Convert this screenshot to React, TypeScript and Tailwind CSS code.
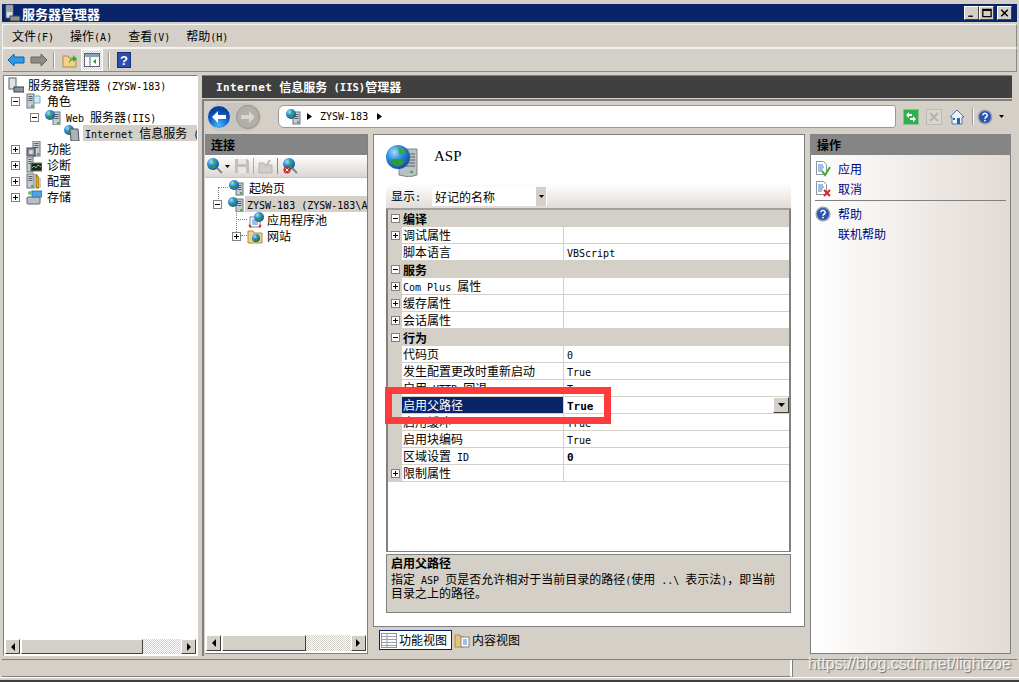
import React from "react";

const latin = "font-['DejaVu_Sans_Mono'] text-[10px]";

// latin runs are narrower than the cjk ones, split them so the widths come out right
const T = ({ children, bold }: { children: string; bold?: boolean }) => {
	const parts = children.split(/([\x00-\x7f]+)/).filter(Boolean);
	return (
		<span className={`whitespace-pre ${bold ? "font-bold" : ""}`}>
			{parts.map((p, i) =>
				/^[\x00-\x7f]/.test(p) ? (
					<span key={i} className={latin}>
						{p}
					</span>
				) : (
					<span key={i}>{p}</span>
				),
			)}
		</span>
	);
};

const Globe = ({ x = 0, y = 0, r = 5 }: { x?: number; y?: number; r?: number }) => (
	<g>
		<circle cx={x + r} cy={y + r} r={r} fill="url(#globeFill)" />
		<path
			d={`M${x + r * 0.35} ${y + r * 1.3} q${r * 0.6} ${-r * 0.35} ${r * 1.2} ${r * 0.05} q${-r * 0.2} ${r * 0.5} ${-r * 0.8} ${r * 0.4} z`}
			fill="#2f9a3a"
		/>
		<path d={`M${x + r} ${y + r * 0.2} q${r * 0.5} ${r * 0.05} ${r * 0.7} ${r * 0.5} l${-r * 0.6} ${r * 0.1} z`} fill="#3aa845" />
	</g>
);

const Tower = ({ x = 8, y = 3, w = 7, h = 13 }: { x?: number; y?: number; w?: number; h?: number }) => (
	<g>
		<rect x={x} y={y} width={w} height={h} fill="#c6ccd2" stroke="#6d747c" strokeWidth="1" />
		<path d={`M${x + 1.5} ${y + 2.5}h${w - 3}M${x + 1.5} ${y + 4.5}h${w - 3}M${x + 1.5} ${y + 6.5}h${w - 3}`} stroke="#555c64" strokeWidth="1" />
		<rect x={x + w - 3} y={y + h - 3} width="2" height="2" fill="#45b045" />
	</g>
);

const Ico = ({ children, w = 16, h = 16, className = "" }: { children: React.ReactNode; w?: number; h?: number; className?: string }) => (
	<svg width={w} height={h} viewBox={`0 0 ${w} ${h}`} className={`shrink-0 ${className}`}>
		{children}
	</svg>
);

const WebServer = () => (
	<Ico>
		<Tower />
		<Globe x={0} y={1} r={5} />
	</Ico>
);

const Expander = ({ open }: { open?: boolean }) => (
	<svg width="9" height="9" viewBox="0 0 9 9" className="shrink-0">
		<rect x="0.5" y="0.5" width="8" height="8" fill="#fff" stroke="#808080" />
		<path d="M2 4.5h5" stroke="#000" />
		{!open && <path d="M4.5 2v5" stroke="#000" />}
	</svg>
);

const ArrowBtn = ({ dir, className = "" }: { dir: "l" | "r"; className?: string }) => (
	<div className={`w-[15px] h-full bg-[#d4d0c8] border border-[#ffffff] border-r-[#404040] border-b-[#404040] flex items-center justify-center shrink-0 ${className}`}>
		<svg width="6" height="8" viewBox="0 0 6 8">
			<path d={dir === "l" ? "M5 0v8L1 4z" : "M1 0v8l4-4z"} fill="#000" />
		</svg>
	</div>
);

const Scrollbar = ({ thumb, track, className = "" }: { thumb: string; track: string; className?: string }) => (
	<div className={`flex items-stretch shrink-0 ${className}`}>
		<ArrowBtn dir="l" />
		<div className={`${thumb} bg-[#d4d0c8] border border-white border-r-[#404040] border-b-[#404040] ml-px`} />
		<div className={`${track} bg-[repeating-conic-gradient(#d4d0c8_0_25%,#ffffff_0_50%)] bg-[length:2px_2px]`} />
		<ArrowBtn dir="r" />
	</div>
);

const Cat = ({ label }: { label: string }) => (
	<div className="h-[17px] bg-[#d4d0c8] flex items-center pl-[3px]">
		<Expander open />
		<span className="ml-[3px] font-bold">{label}</span>
	</div>
);

const Prop = ({ name, value, exp, sel, bold }: { name: string; value?: string; exp?: boolean; sel?: boolean; bold?: boolean }) => (
	<div className="h-[17px] flex border-b border-[#d4d0c8] bg-white">
		<div className="w-[14px] bg-[#d4d0c8] flex items-center justify-center shrink-0">{exp && <Expander />}</div>
		<div className={`w-[162px] pl-[1px] border-r border-[#d4d0c8] shrink-0 leading-[16px] ${sel ? "bg-[#0a246a] text-white" : ""}`}>
			<T>{name}</T>
		</div>
		<div className="flex-1 pl-[3px] leading-[16px] relative">
			{value && <span className={`${latin} ${bold ? "font-bold text-[11px]" : ""}`}>{value}</span>}
			{sel && (
				<div className="absolute right-0 top-0 w-4 h-4 bg-[#d4d0c8] border border-white border-r-[#404040] border-b-[#404040] flex items-center justify-center">
					<svg width="7" height="4" viewBox="0 0 7 4">
						<path d="M0 0h7L3.5 4z" fill="#000" />
					</svg>
				</div>
			)}
		</div>
	</div>
);

const TreeRow = ({ pad, exp, open, icon, text, hl, gap = "ml-[3px]" }: { pad: string; exp?: boolean; open?: boolean; icon: React.ReactNode; text: string; hl?: boolean; gap?: string }) => (
	<div className={`h-4 flex items-center whitespace-nowrap overflow-hidden ${pad}`}>
		{exp !== undefined && <span className="w-[15px] shrink-0 flex">{exp && <Expander open={open} />}</span>}
		{icon}
		<div className={`${gap} h-4 leading-4 flex-1 px-[2px] ${hl ? "bg-[#d4d0c8]" : ""}`}>
			<T>{text}</T>
		</div>
	</div>
);

const HelpIcon = () => (
	<Ico>
		<circle cx="8" cy="8" r="7.5" fill="#9aa0ac" />
		<circle cx="8" cy="8" r="6" fill="#2a55b0" />
		<path d="M5.8 6.3a2.2 2 0 1 1 3.4 1.7c-.8.5-1.2.9-1.2 1.7" fill="none" stroke="#fff" strokeWidth="1.5" />
		<rect x="7.2" y="10.8" width="1.6" height="1.6" fill="#fff" />
	</Ico>
);

const PageIcon = ({ children }: { children: React.ReactNode }) => (
	<Ico>
		<path d="M1.5 .5h7l3 3v10h-10z" fill="#fff" stroke="#8d949c" />
		<path d="M3 4h5M3 6h6M3 8h5M3 10h4" stroke="#3f7fc8" />
		{children}
	</Ico>
);

const Separator = ({ className = "" }: { className?: string }) => <div className={`w-[2px] h-[17px] bg-[#9a9a94] border-r border-white ${className}`} />;

export default function App() {
	return (
		<div className="w-[1019px] h-[682px] overflow-hidden bg-[#d4d0c8] text-[12px] leading-none text-black font-['Noto_Sans_CJK_SC',sans-serif] flex flex-col pt-[4px] relative">
			{/* shared gradients for the icons */}
			<svg width="0" height="0" className="absolute">
				<defs>
					<radialGradient id="globeFill" cx="35%" cy="30%" r="75%">
						<stop offset="0%" stopColor="#9fdcf8" />
						<stop offset="45%" stopColor="#2f8fdc" />
						<stop offset="100%" stopColor="#0f4aa0" />
					</radialGradient>
					<radialGradient id="backFill" cx="50%" cy="85%" r="70%">
						<stop offset="0%" stopColor="#4fb4f5" />
						<stop offset="60%" stopColor="#1460c8" />
						<stop offset="100%" stopColor="#0a3f9a" />
					</radialGradient>
				</defs>
			</svg>

			{/* title bar */}
			<div className="h-[18px] mx-[2px] bg-[#0a246a] flex items-center pl-[3px] pr-[5px] shrink-0">
				<Ico w={16} h={18}>
					<rect x="1" y="1" width="7" height="13" fill="#dfe3e8" stroke="#59606a" />
					<path d="M2 3h5M2 5h5M2 7h5" stroke="#59606a" />
					<rect x="5" y="12" width="10" height="5" fill="#8c929a" stroke="#3c4148" />
				</Ico>
				<span className="ml-[1px] text-white font-bold text-[13px]">服务器管理器</span>
				<div className="ml-auto flex items-center">
					{["M3 10h5", "M2.500 2.500h9v8h-9zM2.500 3.500h9", "M3 3l7 7M10 3l-7 7"].map((d, i) => (
						<div key={i} className={`w-[15px] h-[14px] bg-[#d4d0c8] border border-white border-r-[#404040] border-b-[#404040] flex items-center justify-center ${i === 2 ? "ml-[3px]" : ""}`}>
							<svg width="13" height="12" viewBox="0 0 13 13">
								<path d={d} fill="none" stroke="#000" strokeWidth={i === 2 ? 1.6 : 1.4} />
							</svg>
						</div>
					))}
				</div>
			</div>

			{/* menu */}
			<div className="h-[24px] mt-[2px] mx-[2px] border border-[#f4f3ef] border-r-[#8b8b85] flex items-center gap-[16px] pl-[9px] shrink-0">
				<T>文件(F)</T>
				<T>操作(A)</T>
				<T>查看(V)</T>
				<T>帮助(H)</T>
			</div>

			{/* toolbar */}
			<div className="h-[24px] mx-[2px] border border-[#f4f3ef] border-r-[#8b8b85] border-b-[#8b8b85] flex items-center pl-[4px] shrink-0">
				<Ico w={18} h={14}>
					<path d="M1 7l6-6v3h10v6H7v3z" fill="#2f9be8" stroke="#0f5fa8" />
				</Ico>
				<Ico w={18} h={14} className="ml-[5px]">
					<path d="M17 7l-6-6v3H1v6h10v3z" fill="#8d8d88" stroke="#66665f" />
				</Ico>
				<Separator className="ml-[5px]" />
				<Ico w={16} h={16} className="ml-[7px]">
					<path d="M1 4h5l1 2h7v9H1z" fill="#f2d28a" stroke="#b58a3a" />
					<path d="M7 12c0-4 1-5 4-6V3l4 4-4 3V8c-2 0-3 1-4 4z" fill="#38a838" />
				</Ico>
				<div className="ml-[3px] w-[22px] h-[22px] bg-[repeating-conic-gradient(#d4d0c8_0_25%,#ffffff_0_50%)] bg-[length:2px_2px] border border-[#ffffff] flex items-center justify-center">
					<Ico w={16} h={14}>
						<rect x=".5" y=".5" width="15" height="13" fill="#fff" stroke="#5f6870" />
						<rect x="1" y="1" width="14" height="3" fill="#8aa0b5" />
						<path d="M6 4v9" stroke="#5f6870" />
						<path d="M12 6v5L9 8.500z" fill="#2c9a3a" />
					</Ico>
				</div>
				<Separator className="ml-[5px]" />
				<Ico w={14} h={16} className="ml-[7px]">
					<rect x=".5" y=".5" width="13" height="15" fill="#2a4fb0" stroke="#1b2f78" />
					<text x="7" y="13" textAnchor="middle" fontSize="13" fontWeight="bold" fill="#fff" fontFamily="Liberation Sans">?</text>
				</Ico>
			</div>

			{/* body */}
			<div className="flex-1 min-h-0 flex gap-[4px] pl-[3px] pr-[7px] pt-[3px] pb-[3px]">
				{/* left tree */}
				<div className="w-[195px] border border-[#808080] border-r-white border-b-white bg-white flex flex-col">
					<div className="flex-1 pt-[1px]">
						<TreeRow
							pad="pl-[4px]"
							icon={
								<Ico>
									<rect x="1" y="1" width="7" height="11" fill="#dfe3e8" stroke="#59606a" />
									<rect x="6" y="10" width="10" height="5" fill="#8c929a" stroke="#3c4148" />
								</Ico>
							}
							text="服务器管理器 (ZYSW-183)"
							gap="ml-[2px]"
						/>
						<TreeRow
							pad="pl-[7px]"
							exp
							open
							icon={
								<Ico>
									<Tower x={1} y={1} w={7} h={14} />
									<path d="M8 3h6v7H8z" fill="#d7e8fa" stroke="#7aa7d8" />
								</Ico>
							}
							text="角色"
						/>
						<TreeRow pad="pl-[26px]" exp open icon={<WebServer />} text="Web 服务器(IIS)" />
						<TreeRow
							pad="pl-[60px]"
							icon={
								<Ico>
									<Globe x={0} y={0} r={5} />
									<path d="M6 4h8l1 12H7z" fill="#aab2ba" stroke="#4b525a" />
								</Ico>
							}
							text="Internet 信息服务 (IIS)管理器"
							hl
						/>
						<TreeRow
							pad="pl-[7px]"
							exp
							icon={
								<Ico>
									<Tower x={7} y={0} w={7} h={15} />
									<rect x="1" y="7" width="8" height="8" fill="#8d949c" stroke="#3c4148" />
									<circle cx="5" cy="11" r="2" fill="#d8dde2" />
								</Ico>
							}
							text="功能"
						/>
						<TreeRow
							pad="pl-[7px]"
							exp
							icon={
								<Ico>
									<Tower x={1} y={0} w={6} h={15} />
									<rect x="5" y="6" width="11" height="8" fill="#222" stroke="#777" />
									<path d="M6 11l2-2 2 2 2-3 3 2" stroke="#5ad05a" fill="none" />
								</Ico>
							}
							text="诊断"
						/>
						<TreeRow
							pad="pl-[7px]"
							exp
							icon={
								<Ico>
									<Tower x={1} y={1} w={7} h={14} />
									<path d="M10 1l3 4v10h-3z" fill="#e8b020" stroke="#8a6510" />
									<path d="M14 5v10" stroke="#c9cdd2" strokeWidth="2" />
								</Ico>
							}
							text="配置"
						/>
						<TreeRow
							pad="pl-[7px]"
							exp
							icon={
								<Ico>
									<rect x="1" y="8" width="13" height="7" rx="1" fill="#b9bfc6" stroke="#5f6670" />
									<rect x="6" y="2" width="10" height="6" fill="#4aa3e8" stroke="#3a7ab0" />
									<circle cx="4" cy="4" r="2" fill="#6cc06c" />
								</Ico>
							}
							text="存储"
						/>
					</div>
					<Scrollbar thumb="w-[122px]" track="w-[38px]" className="h-[15px] mx-[1px] mb-[1px]" />
				</div>

				{/* iis pane */}
				<div className="flex-1 min-w-0 flex flex-col">
					<div className="h-[23px] bg-[#404040] border-t border-[#808080] flex items-center pl-[14px] text-white font-bold shrink-0">
						<span className="font-['DejaVu_Sans_Mono'] text-[11px] tracking-[.4px] whitespace-pre">Internet </span>
						信息服务
						<span className="font-['DejaVu_Sans_Mono'] text-[10.500px] whitespace-pre"> (IIS)</span>
						管理器
					</div>
					<div className="flex-1 min-h-0 mt-[1px] border-l-2 border-t-2 border-[#808080] flex flex-col">
						{/* nav */}
						<div className="h-[33px] flex items-center pl-[3px] pr-[8px] pb-[2px] shrink-0">
							<div className="flex items-center h-[28px] rounded-full bg-[#c9c5bd] pr-[1px]">
								<svg width="24" height="24" viewBox="0 0 24 24">
									<circle cx="12" cy="12" r="11.500" fill="url(#backFill)" stroke="#d8dce4" />
									<path d="M5 12l6-6v4h8v4h-8v4z" fill="#fff" />
								</svg>
								<svg width="24" height="24" viewBox="0 0 24 24" className="ml-[5px]">
									<circle cx="12" cy="12" r="11.500" fill="#b2aea8" stroke="#94918b" />
									<path d="M19 12l-6-6v4H5v4h8v4z" fill="#d8d6d0" />
								</svg>
							</div>
							<div className="ml-[17px] w-[618px] h-[23px] bg-white border border-[#9a9a94] rounded-[3px] rounded-l-[6px] flex items-center pl-[7px]">
								<Ico>
									<Tower x={7} y={3} w={7} h={12} />
									<Globe x={0} y={0} r={5} />
								</Ico>
								<svg width="5" height="7" viewBox="0 0 5 7" className="ml-[5px]">
									<path d="M0 0l5 3.500L0 7z" fill="#000" />
								</svg>
								<span className={`${latin} ml-[8px]`}>ZYSW-183</span>
								<svg width="5" height="7" viewBox="0 0 5 7" className="ml-[9px]">
									<path d="M0 0l5 3.500L0 7z" fill="#000" />
								</svg>
							</div>
							<Ico h={16} className="ml-[7px]">
								<rect x=".5" y=".5" width="15" height="15" fill="#2eb04a" stroke="#8bbf97" />
								<path d="M3 6l3-3v2h3v2H6v2zM13 10l-3 3v-2H7V9h3V7z" fill="#fff" />
							</Ico>
							<Ico h={16} className="ml-[7px]">
								<rect x=".5" y=".5" width="15" height="15" fill="#d8d6d0" stroke="#bcbab4" />
								<path d="M4 4l8 8M12 4l-8 8" stroke="#b5b3ad" strokeWidth="2" />
							</Ico>
							<Ico h={16} className="ml-[7px]">
								<path d="M8 1L1 8h2v7h10V8h2z" fill="#eef3f8" stroke="#4a76b8" />
								<rect x="8" y="9" width="3" height="6" fill="#2f5f9f" />
								<rect x="4" y="9" width="2" height="2" fill="#2f5f9f" />
							</Ico>
							<Separator className="ml-[7px]" />
							<div className="ml-[3px]">
								<HelpIcon />
							</div>
							<svg width="5" height="3" viewBox="0 0 5 3" className="ml-[6px]">
								<path d="M0 0h5L2.500 3z" fill="#000" />
							</svg>
						</div>

						<div className="flex-1 min-h-0 flex pl-[1px] pr-[1px]">
							{/* connections */}
							<div className="w-[163px] h-[520px] shrink-0 bg-white border-r border-b border-[#808080] flex flex-col">
								<div className="h-[21px] bg-[#858585] flex items-center pl-[6px] font-bold">连接</div>
								<div className="h-[23px] bg-gradient-to-b from-[#fff] to-[#dcd6d0] flex items-center pl-[2px] border-b border-[#c8c4bc]">
									<Ico>
										<Globe x={0} y={0} r={6} />
										<path d="M10 10l5 5" stroke="#7f868e" strokeWidth="2" />
									</Ico>
									<svg width="5" height="3" viewBox="0 0 5 3" className="ml-[2px]">
										<path d="M0 0h5L2.500 3z" fill="#000" />
									</svg>
									<Ico className="ml-[4px]">
										<path d="M1 1h12l2 2v12H1z" fill="#c0c0bc" />
										<rect x="4" y="1" width="8" height="5" fill="#e8e8e4" />
										<rect x="4" y="9" width="8" height="6" fill="#e8e8e4" />
									</Ico>
									<div className="w-px h-[16px] bg-[#aaa] ml-[3px]" />
									<Ico className="ml-[4px]">
										<path d="M1 5h5l1 2h7v8H1z" fill="#cfcfca" stroke="#b5b5b0" />
										<path d="M8 8l4-6" stroke="#bdbdb8" strokeWidth="2" />
									</Ico>
									<div className="w-px h-[16px] bg-[#888] ml-[3px]" />
									<Ico className="ml-[4px]">
										<Globe x={1} y={0} r={6} />
										<path d="M10 10l5 5" stroke="#7f868e" strokeWidth="2" />
										<circle cx="5" cy="12" r="3.500" fill="#d02828" />
										<path d="M3.500 10.500l3 3M6.500 10.500l-3 3" stroke="#fff" />
									</Ico>
								</div>
								<div className="flex-1 relative pt-[2px]">
									{/* dotted tree lines */}
									<div className="absolute left-[13px] top-[9px] h-[16px] border-l border-dotted border-[#808080]" />
									<div className="absolute left-[13px] top-[9px] w-[10px] border-t border-dotted border-[#808080]" />
									<div className="absolute left-[31px] top-[32px] h-[26px] border-l border-dotted border-[#808080]" />
									<div className="absolute left-[31px] top-[41px] w-[11px] border-t border-dotted border-[#808080]" />
									<div className="absolute left-[36px] top-[57px] w-[6px] border-t border-dotted border-[#808080]" />
									<TreeRow
										pad="pl-[23px] relative"
										icon={
											<Ico>
												<Tower x={8} y={3} w={7} h={12} />
												<Globe x={1} y={0} r={5} />
											</Ico>
										}
										text="起始页"
									/>
									<TreeRow pad="pl-[8px] relative" exp open icon={<WebServer />} text="ZYSW-183 (ZYSW-183\Administrator)" hl gap="ml-[1px]" />
									<TreeRow
										pad="pl-[43px] relative"
										icon={
											<Ico>
												<rect x="2" y="5" width="10" height="10" fill="#fff" stroke="#7f868e" />
												<path d="M4 8h6M4 10h6M4 12h6" stroke="#3f7fc8" />
												<Globe x={6} y={0} r={5} />
												<path d="M1 13l2 2M13 13l-2 2" stroke="#d03020" strokeWidth="2" />
											</Ico>
										}
										text="应用程序池"
										gap="ml-[1px]"
									/>
									<TreeRow
										pad="pl-[27px] relative"
										exp
										icon={
											<Ico>
												<path d="M1 3h5l1 2h8v10H1z" fill="#f2d28a" stroke="#b58a3a" />
												<Globe x={5} y={6} r={4} />
											</Ico>
										}
										text="网站"
										gap="ml-[2px]"
									/>
								</div>
								<Scrollbar thumb="w-[85px]" track="w-[45px]" className="h-[16px] mb-[2px] mx-[1px]" />
							</div>

							{/* center */}
							<div className="w-[432px] ml-[5px] shrink-0 flex flex-col">
								<div className="h-[493px] border border-[#808080] bg-white pl-[12px] pr-[12px] flex flex-col shrink-0">
									<div className="h-[48px] flex items-center shrink-0">
										<Ico w={33} h={33} className="mt-[3px]">
											<path d="M13 5h18v26l-8 2-10-2z" fill="#b9c0c6" stroke="#7f868e" />
											<path d="M19 10h10M19 13h10M19 16h10M19 19h10M19 22h10" stroke="#59606a" />
											<rect x="24" y="27" width="3" height="2" fill="#45b045" />
											<Globe x={0} y={1} r={12} />
										</Ico>
										<span className="ml-[15px] mb-[6px] font-['Liberation_Serif'] text-[15px]">ASP</span>
									</div>
									<div className="h-[25px] w-[405px] bg-gradient-to-b from-white to-[#e2dcd7] flex items-center pl-[5px] pt-[2px] shrink-0">
										<T>显示:</T>
										<div className="ml-[11px] w-[115px] h-[19px] bg-white flex items-center pl-[3px] relative">
											好记的名称
											<div className="absolute right-[1px] top-0 bottom-0 w-[10px] bg-[#d4d0c8] flex items-center justify-center">
												<svg width="5" height="3" viewBox="0 0 5 3">
													<path d="M0 0h5L2.500 3z" fill="#000" />
												</svg>
											</div>
										</div>
									</div>
									{/* property grid */}
									<div className="w-[405px] h-[344px] border-2 border-b border-[#808080] border-t-[#a0a0a0] relative shrink-0">
										<Cat label="编译" />
										<Prop name="调试属性" exp />
										<Prop name="脚本语言" value="VBScript" />
										<Cat label="服务" />
										<Prop name="Com Plus 属性" exp />
										<Prop name="缓存属性" exp />
										<Prop name="会话属性" exp />
										<Cat label="行为" />
										<Prop name="代码页" value="0" />
										<Prop name="发生配置更改时重新启动" value="True" />
										<Prop name="启用 HTTP 回退" value="True" />
										<Prop name="启用父路径" value="True" sel bold />
										<Prop name="启用缓冲" value="True" />
										<Prop name="启用块编码" value="True" />
										<Prop name="区域设置 ID" value="0" bold />
										<Prop name="限制属性" exp />
										{/* red annotation box drawn over the grid */}
										<div className="absolute left-[-3px] top-[177px] w-[226px] h-[37px] border-[7px] border-[#ff3b3b]" />
									</div>
									<div className="w-[405px] h-[59px] mt-[2px] border border-[#808080] bg-[#d4d0c8] pl-[4px] pt-[2px] shrink-0">
										<div className="font-bold h-[16px]">启用父路径</div>
										<div className="leading-[12px]">
											<div>
												<T>指定 ASP 页是否允许相对于当前目录的路径(使用 ..\ 表示法)</T>，即当前
											</div>
											<div>目录之上的路径。</div>
										</div>
									</div>
								</div>
								<div className="flex items-center h-[20px] mt-[3px] ml-[6px]">
									<div className="h-[20px] w-[73px] bg-white border border-[#0a246a] flex items-center pl-[1px]">
										<Ico w={16} h={15}>
											<rect x=".5" y=".5" width="15" height="14" fill="#fff" stroke="#8d949c" />
											<path d="M1 3.500h14M1 6.500h14M1 9.500h14M1 12.500h14M6 1v13" stroke="#9aa2aa" />
										</Ico>
										<span className="ml-[2px]">功能视图</span>
									</div>
									<Ico className="ml-[2px]">
										<path d="M1 3h5l1 2h3v10H1z" fill="#e6c57a" stroke="#b58a3a" />
										<rect x="7" y="5" width="8" height="10" fill="#fff" stroke="#7f868e" />
										<path d="M9 8h4M9 10h4M9 12h4" stroke="#3f7fc8" />
									</Ico>
									<span className="ml-[2px]">内容视图</span>
								</div>
							</div>

							{/* actions */}
							<div className="w-[201px] h-[520px] ml-[5px] shrink-0 border border-[#808080] bg-gradient-to-r from-white to-[#e2dad4] flex flex-col">
								<div className="h-[21px] bg-[#858585] -mx-px -mt-px flex items-center pl-[7px] font-bold shrink-0">操作</div>
								<div className="text-[#000080] pt-[4px] pl-[4px] pr-[4px]">
									<div className="h-[20px] flex items-center">
										<PageIcon>
											<path d="M7 10l3 4 5-8" fill="none" stroke="#3cb020" strokeWidth="2" />
										</PageIcon>
										<span className="ml-[7px]">应用</span>
									</div>
									<div className="h-[20px] flex items-center">
										<PageIcon>
											<path d="M9 9l6 6M15 9l-6 6" stroke="#e02020" strokeWidth="2" />
										</PageIcon>
										<span className="ml-[7px]">取消</span>
									</div>
									<div className="h-px bg-[#808080] mt-[1px] mb-[2px]" />
									<div className="h-[20px] flex items-center mt-[3px]">
										<HelpIcon />
										<span className="ml-[7px]">帮助</span>
									</div>
									<div className="h-[20px] flex items-center pl-[23px]">联机帮助</div>
								</div>
							</div>
						</div>
					</div>
				</div>
			</div>

			{/* status bar */}
			<div className="h-[18px] mx-[2px] border-t border-[#808080] flex shrink-0">
				<div className="w-[790px] border-r-2 border-white border-b border-b-[#808080]" />
				<div className="flex-1 border-l border-[#808080] border-b-0" />
			</div>
			<div className="h-[3px] border-t border-white shrink-0" />
			<div className="h-[2px] bg-[#404040] shrink-0" />

			{/* csdn watermark sits on top of everything */}
			<div className="absolute left-[808px] top-[654px] font-['Liberation_Sans'] text-[16px] leading-[20px] text-white/80 [text-shadow:1px_1px_1px_#6f6f6f]">
				https://blog.csdn.net/lightzoe
			</div>
		</div>
	);
}
